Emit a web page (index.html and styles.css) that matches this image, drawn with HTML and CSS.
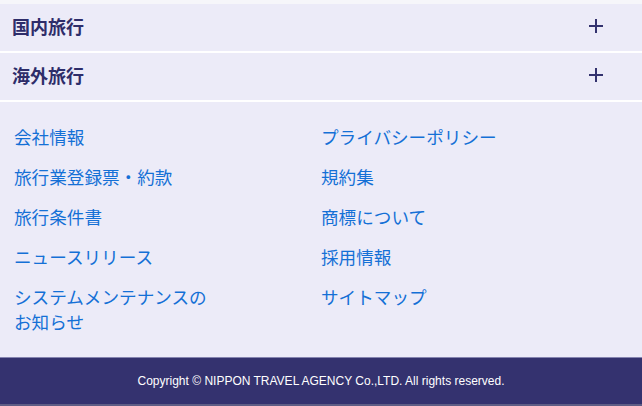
FILE: index.html
```html
<!DOCTYPE html>
<html lang="ja">
<head>
<meta charset="utf-8">
<link rel="stylesheet" href="styles.css">
</head>
<body>
<div class="page">
  <div class="acc">
    <div class="acc-row"><span class="acc-title">国内旅行</span><span class="plus"></span></div>
    <div class="acc-row"><span class="acc-title">海外旅行</span><span class="plus"></span></div>
  </div>
  <nav class="links">
    <ul class="col">
      <li><a href="#">会社情報</a></li>
      <li><a href="#">旅行業登録票・約款</a></li>
      <li><a href="#">旅行条件書</a></li>
      <li><a href="#">ニュースリリース</a></li>
      <li><a href="#">システムメンテナンスの<br>お知らせ</a></li>
    </ul>
    <ul class="col">
      <li><a href="#">プライバシーポリシー</a></li>
      <li><a href="#">規約集</a></li>
      <li><a href="#">商標について</a></li>
      <li><a href="#">採用情報</a></li>
      <li><a href="#">サイトマップ</a></li>
    </ul>
  </nav>
  <footer class="footer">Copyright © NIPPON TRAVEL AGENCY Co.,LTD. All rights reserved.</footer>
</div>
</body>
</html>
```
FILE: styles.css
```css
html, body {
  margin: 0;
  padding: 0;
}
body {
  background: #f6f6fa;
  font-family: "Noto Sans CJK JP", "Noto Sans", sans-serif;
  width: 642px;
  height: 406px;
  overflow: hidden;
}
.page {
  padding-top: 4px;
  background: #f6f6fa;
}
.acc {
  display: flex;
  flex-direction: column;
}
.acc-row {
  height: 47px;
  background: #ecebf8;
  border-bottom: 2px solid #ffffff;
  display: flex;
  align-items: center;
  justify-content: space-between;
  padding: 0 39px 0 12px;
  box-sizing: content-box;
}
.acc-title {
  font-size: 18px;
  font-weight: 700;
  color: #2e2d6a;
  line-height: 1;
  margin-top: -4px;
}
.plus {
  position: relative;
  width: 14px;
  height: 14px;
  margin-top: -3px;
}
.plus::before, .plus::after {
  content: "";
  position: absolute;
  background: #33326e;
}
.plus::before {
  left: 0;
  top: 5.7px;
  width: 14px;
  height: 2.8px;
}
.plus::after {
  left: 5.6px;
  top: 0;
  width: 2.8px;
  height: 14px;
}
.links {
  background: #ecebf8;
  display: grid;
  grid-template-columns: 1fr 1fr;
  padding: 22px 14px 21px 14px;
  height: 212px;
}
.col {
  list-style: none;
  margin: 0;
  padding: 0;
  display: flex;
  flex-direction: column;
  gap: 15px;
}
.col li {
  font-size: 17.6px;
  line-height: 25px;
}
.col a {
  color: #1470d6;
  text-decoration: none;
}
.footer {
  background: #34326f;
  border-top: 1px solid #8584b0;
  border-bottom: 2px solid #5e5d85;
  height: 46px;
  box-sizing: content-box;
  display: flex;
  align-items: center;
  justify-content: center;
  color: #ffffff;
  font-family: "Liberation Sans", Arial, sans-serif;
  font-size: 12px;
}
```
